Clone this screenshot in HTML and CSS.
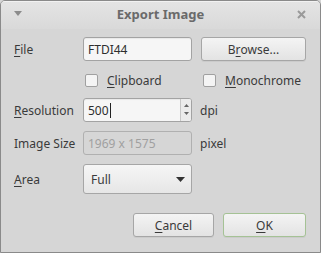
FILE: index.html
```html
<!DOCTYPE html>
<html>
<head>
<meta charset="utf-8">
<link rel="stylesheet" href="styles.css">
</head>
<body>
<div class="dialog">
  <div class="titlebar">
    <svg class="menu-arrow" width="8" height="5" viewBox="0 0 8 5"><path d="M0 0H8L4 5Z" fill="#8c8c8c"/></svg>
    <span class="title">Export Image</span>
    <svg class="close" width="9" height="9" viewBox="0 0 9 9"><path d="M1 1L8 8M8 1L1 8" stroke="#9a9a9a" stroke-width="2"/></svg>
  </div>
  <div class="content">
    <div class="form">
      <span class="label"><u>F</u>ile</span>
      <div class="entry">FTDI44</div>
      <div class="button">B<u>r</u>owse...</div>

      <span></span>
      <label class="check"><span class="box"></span><span><u>C</u>lipboard</span></label>
      <label class="check"><span class="box"></span><span><u>M</u>onochrome</span></label>

      <span class="label"><u>R</u>esolution</span>
      <div class="entry spin"><span class="val">500<span class="caret"></span></span><span class="spinner"><svg width="5" height="3" viewBox="0 0 5 3"><path d="M0 3H5L2.5 0Z" fill="#666"/></svg><svg width="5" height="3" viewBox="0 0 5 3"><path d="M0 0H5L2.5 3Z" fill="#666"/></svg></span></div>
      <span class="unit">dpi</span>

      <span class="label">Image Size</span>
      <div class="entry disabled">1969 x 1575</div>
      <span class="unit">pixel</span>

      <span class="label"><u>A</u>rea</span>
      <div class="combo"><span>Full</span><svg width="9" height="5" viewBox="0 0 9 5"><path d="M0 0H9L4.5 5Z" fill="#333"/></svg></div>
      <span></span>
    </div>
    <div class="actions">
      <div class="button cancel"><u>C</u>ancel</div>
      <div class="button ok"><u>O</u>K</div>
    </div>
  </div>
</div>
</body>
</html>
```
FILE: styles.css
```css
* { box-sizing: border-box; }
html, body { margin: 0; padding: 0; background: #d6d6d6; }
body {
  font-family: "Noto Sans", "DejaVu Sans", sans-serif;
  font-size: 12px;
  color: #3a3a3a;
}
.dialog {
  width: 321px;
  height: 253px;
  border: 1px solid #8a8a8a;
  border-radius: 5px 5px 0 0;
  background: #d6d6d6;
  overflow: hidden;
}
.titlebar {
  height: 28px;
  display: flex;
  align-items: center;
  justify-content: space-between;
  padding: 0 14px 4px 13px;
  background: linear-gradient(#e4e4e4, #d9d9d9);
  border-top: 1px solid #f2f2f2;
}
.title {
  font-weight: bold;
  color: #6a6a6a;
  font-size: 13px;
  padding-left: 2px;
}
.menu-arrow { margin-top: 0; }
.close { margin-top: 2px; }
.content {
  padding: 8px 14px 0 13px;
}
.form {
  display: grid;
  grid-template-columns: 60px 109px 105px;
  grid-template-rows: 24px 19px 24px 24px 30px;
  column-gap: 9px;
  row-gap: 9px;
  align-items: center;
}
.label { line-height: 16px; white-space: nowrap; padding-top: 1px; }
u { text-decoration: underline; text-underline-offset: 2px; }
.entry {
  height: 24px;
  border: 1px solid #a3a3a3;
  border-radius: 3px;
  background: #f6f6f6;
  padding: 0 4px;
  display: flex;
  align-items: center;
  color: #2e2e2e;
  white-space: nowrap;
  box-shadow: inset 0 1px 1px rgba(0,0,0,0.06);
}
.entry.disabled {
  background: #d6d6d6;
  color: #a0a0a0;
  border-color: #b0b0b0;
  box-shadow: none;
}
.spin { padding-right: 0; justify-content: space-between; }
.val { display: flex; align-items: center; }
.caret { display: inline-block; width: 1px; height: 15px; background: #222; margin-left: 1px; }
.spinner {
  width: 11px;
  height: 22px;
  border-left: 1px solid #c8c8c8;
  background: #ececec;
  border-radius: 0 2px 2px 0;
  display: flex;
  flex-direction: column;
  align-items: center;
  justify-content: space-between;
  padding: 5px 0 6px;
}
.spinner svg { display: block; }
.unit { margin-left: -1px; padding-top: 1px; }
.button {
  height: 24px;
  border: 1px solid #a6a6a6;
  border-radius: 3px;
  background: linear-gradient(#f4f4f4, #e3e3e3);
  display: flex;
  align-items: center;
  justify-content: center;
  box-shadow: 0 1px 0 rgba(0,0,0,0.05);
}
.check {
  display: flex;
  align-items: center;
  gap: 9px;
  padding-left: 2px;
  padding-top: 1px;
  white-space: nowrap;
}
.check .box {
  width: 13px;
  height: 13px;
  border: 1px solid #a0a0a0;
  border-radius: 2px;
  background: #f4f4f4;
}
.combo {
  height: 30px;
  border: 1px solid #a6a6a6;
  border-radius: 3px;
  background: linear-gradient(#f6f6f6, #e6e6e6);
  display: flex;
  align-items: center;
  justify-content: space-between;
  padding: 0 6px 0 7px;
}
.actions {
  display: flex;
  justify-content: flex-end;
  gap: 9px;
  margin-top: 19px;
}
.cancel { width: 81px; }
.ok { width: 83px; border-color: #a5c295; }
```
